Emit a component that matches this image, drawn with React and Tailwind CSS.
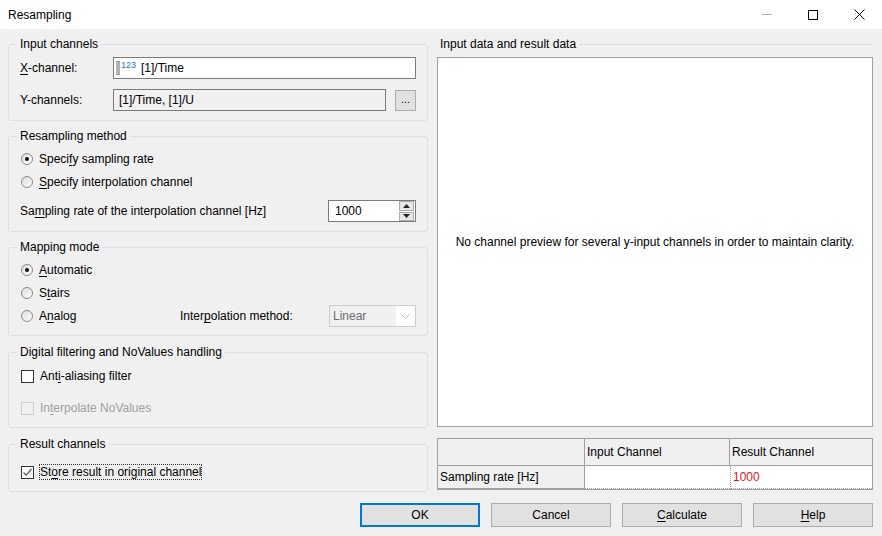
import React from "react";

const Radio = ({ checked, children }) => (
  <div className="flex items-center h-[16px]">
    <span className="ml-[1px] w-[12px] h-[12px] rounded-full border border-[#8a8a8a] bg-gradient-to-br from-[#dcdcdc] to-white flex items-center justify-center">
      {checked && <span className="w-[4px] h-[4px] rounded-full bg-[#111]" />}
    </span>
    <span className="ml-[6px]">{children}</span>
  </div>
);

const Check = ({ checked, disabled, focused, children }) => (
  <div className="flex items-center h-[16px]">
    <span
      className={`ml-[1px] w-[13px] h-[13px] border flex items-center justify-center ${
        disabled ? "border-[#cccccc] bg-[#f0f0f0]" : "border-[#333333] bg-white"
      }`}
    >
      {checked && (
        <svg width="11" height="11" viewBox="0 0 11 11">
          <path d="M1.5 5.5 L4.2 8.2 L9.5 2" fill="none" stroke="#555" strokeWidth="1.2" />
        </svg>
      )}
    </span>
    <span
      className={`ml-[6px] ${disabled ? "text-[#a0a0a0]" : ""} ${
        focused ? "outline outline-1 outline-dotted outline-[#333] leading-[14px]" : ""
      }`}
    >
      {children}
    </span>
  </div>
);

const Group = ({ title, className, children }) => (
  <fieldset className={`border border-[#dcdfe3] rounded-[3px] px-[11px] min-w-0 ${className}`}>
    <legend className="-ml-[3px] px-[3px] leading-[16px]">{title}</legend>
    {children}
  </fieldset>
);

const U = ({ children }) => <span className="underline underline-offset-2">{children}</span>;

const Button = ({ primary, children }) => (
  <button
    className={`w-[120px] h-[24px] bg-[#e1e1e1] flex items-center justify-center ${
      primary ? "border-2 border-[#0078d7]" : "border border-[#adadad]"
    }`}
  >
    {children}
  </button>
);

export default function App() {
  return (
    <div className="w-[882px] h-[536px] bg-[#f0f0f0] flex flex-col text-[12px] text-black font-['Liberation_Sans',Arial,sans-serif] overflow-hidden">
      {/* title bar */}
      <div className="h-[29px] bg-white flex items-center">
        <span className="pl-[8px] flex-1">Resampling</span>
        <div className="w-[46px] h-[29px] flex items-center justify-center">
          <span className="w-[10px] h-px bg-[#b0b0b0]" />
        </div>
        <div className="w-[46px] h-[29px] flex items-center justify-center">
          <span className="w-[10px] h-[10px] border border-black" />
        </div>
        <div className="w-[46px] h-[29px] flex items-center justify-center">
          <svg width="11" height="11" viewBox="0 0 11 11">
            <path d="M0.5 0.5 L10.5 10.5 M10.5 0.5 L0.5 10.5" stroke="#000" strokeWidth="1" />
          </svg>
        </div>
      </div>

      <div className="flex-1 flex flex-col px-[8px] pt-[7px]">
        <div className="flex gap-[9px]">
          {/* left column */}
          <div className="w-[420px] flex flex-col">
            <Group title="Input channels" className="h-[85px]">
              <div className="flex items-center h-[22px] mt-[5px]">
                <span className="w-[93px]">
                  <U>X</U>-channel:
                </span>
                <div className="flex-1 h-[22px] border border-[#7a7a7a] bg-white flex items-center pl-[2px]">
                  <span className="flex items-start h-[14px]">
                    <svg width="4" height="14" viewBox="0 0 4 14">
                      <rect x="0" y="0" width="4" height="14" fill="#9a9a9a" />
                      <path d="M0 2h4M0 4h4M0 6h4M0 8h4M0 10h4M0 12h4" stroke="#d8d8d8" strokeWidth="0.8" />
                    </svg>
                    <span className="text-[9px] leading-[9px] text-[#2a6fc9] ml-[1px]">123</span>
                  </span>
                  <span className="ml-[5px]">[1]/Time</span>
                </div>
              </div>
              <div className="flex items-center h-[22px] mt-[10px]">
                <span className="w-[93px]">Y-channels:</span>
                <div className="flex-1 h-[22px] border border-[#7a7a7a] bg-[#f0f0f0] flex items-center pl-[5px]">
                  [1]/Time, [1]/U
                </div>
                <button className="ml-[9px] w-[21px] h-[21px] border border-[#adadad] bg-[#e1e1e1] flex items-center justify-center text-[11px] leading-none pb-[2px]">
                  ...
                </button>
              </div>
            </Group>

            <Group title="Resampling method" className="h-[104px] mt-[7px]">
              <div className="mt-[7px]">
                <Radio checked>
                  Speci<U>f</U>y sampling rate
                </Radio>
              </div>
              <div className="mt-[7px]">
                <Radio>
                  <U>S</U>pecify interpolation channel
                </Radio>
              </div>
              <div className="flex items-center h-[22px] mt-[10px]">
                <span className="flex-1">
                  Sa<U>m</U>pling rate of the interpolation channel [Hz]
                </span>
                <div className="w-[88px] h-[22px] border border-[#7a7a7a] bg-white flex items-center">
                  <span className="flex-1 pl-[6px]">1000</span>
                  <div className="w-[16px] h-[20px] flex flex-col gap-px pr-[1px]">
                    <div className="flex-1 bg-[#e6e6e6] border border-[#acacac] flex items-center justify-center">
                      <svg width="7" height="4" viewBox="0 0 7 4">
                        <path d="M0 4 L3.5 0 L7 4 Z" fill="#222" />
                      </svg>
                    </div>
                    <div className="flex-1 bg-[#e6e6e6] border border-[#acacac] flex items-center justify-center">
                      <svg width="7" height="4" viewBox="0 0 7 4">
                        <path d="M0 0 L3.5 4 L7 0 Z" fill="#222" />
                      </svg>
                    </div>
                  </div>
                </div>
              </div>
            </Group>

            <Group title="Mapping mode" className="h-[97px] mt-[7px]">
              <div className="mt-[7px]">
                <Radio checked>
                  <U>A</U>utomatic
                </Radio>
              </div>
              <div className="mt-[7px]">
                <Radio>
                  S<U>t</U>airs
                </Radio>
              </div>
              <div className="flex items-center h-[22px] mt-[4px]">
                <div className="w-[160px]">
                  <Radio>
                    A<U>n</U>alog
                  </Radio>
                </div>
                <span className="flex-1">
                  Inter<U>p</U>olation method:
                </span>
                <div className="w-[87px] h-[22px] border border-[#cccccc] bg-[#f7f7f7] flex items-center">
                  <span className="flex-1 pl-[3px] text-[#6d6d6d] bg-[#f0f0f0] h-full flex items-center">Linear</span>
                  <div className="w-[19px] h-full flex items-center justify-center bg-white">
                    <svg width="9" height="5" viewBox="0 0 9 5">
                      <path d="M0.5 0.5 L4.5 4.5 L8.5 0.5" fill="none" stroke="#bdbdbd" strokeWidth="1" />
                    </svg>
                  </div>
                </div>
              </div>
            </Group>

            <Group title="Digital filtering and NoValues handling" className="h-[84px] mt-[8px]">
              <div className="mt-[8px]">
                <Check>
                  Ant<U>i</U>-aliasing filter
                </Check>
              </div>
              <div className="mt-[16px]">
                <Check disabled>
                  In<U>t</U>erpolate NoValues
                </Check>
              </div>
            </Group>

            <Group title="Result channels" className="h-[56px] mt-[8px]">
              <div className="mt-[12px]">
                <Check checked focused>
                  St<U>o</U>re result in original channel
                </Check>
              </div>
            </Group>
          </div>

          {/* right column */}
          <div className="w-[436px] flex flex-col">
            <div className="h-[16px] flex items-center">
              <span className="pl-[3px] pr-[3px]">Input data and result data</span>
              <span className="flex-1 h-px bg-[#dcdfe3]" />
            </div>
            <div className="mt-[5px] h-[370px] border border-[#a0a0a0] bg-white flex items-center justify-center">
              No channel preview for several y-input channels in order to maintain clarity.
            </div>
            <div className="mt-[11px] border border-[#a0a0a0] grid grid-cols-[147px_145px_1fr]">
              <div className="h-[27px] border-b border-r border-[#a0a0a0]" />
              <div className="h-[27px] border-b border-r border-[#a0a0a0] flex items-center pl-[2px]">Input Channel</div>
              <div className="h-[27px] border-b border-[#a0a0a0] flex items-center pl-[2px]">Result Channel</div>
              <div className="h-[23px] border-r border-b border-[#a0a0a0] flex items-center pl-[2px]">Sampling rate [Hz]</div>
              <div className="h-[23px] bg-white border-b border-dotted border-[#a0a0a0]" />
              <div className="h-[23px] bg-white border-l border-b border-dotted border-[#a0a0a0] flex items-center pl-[2px] text-[#e81123]">
                1000
              </div>
            </div>
          </div>
        </div>

        {/* button row */}
        <div className="mt-[11px] flex justify-end gap-[11px] pr-[1px]">
          <Button primary>OK</Button>
          <Button>Cancel</Button>
          <Button>
            <U>C</U>alculate
          </Button>
          <Button>
            <U>H</U>elp
          </Button>
        </div>
      </div>
    </div>
  );
}
